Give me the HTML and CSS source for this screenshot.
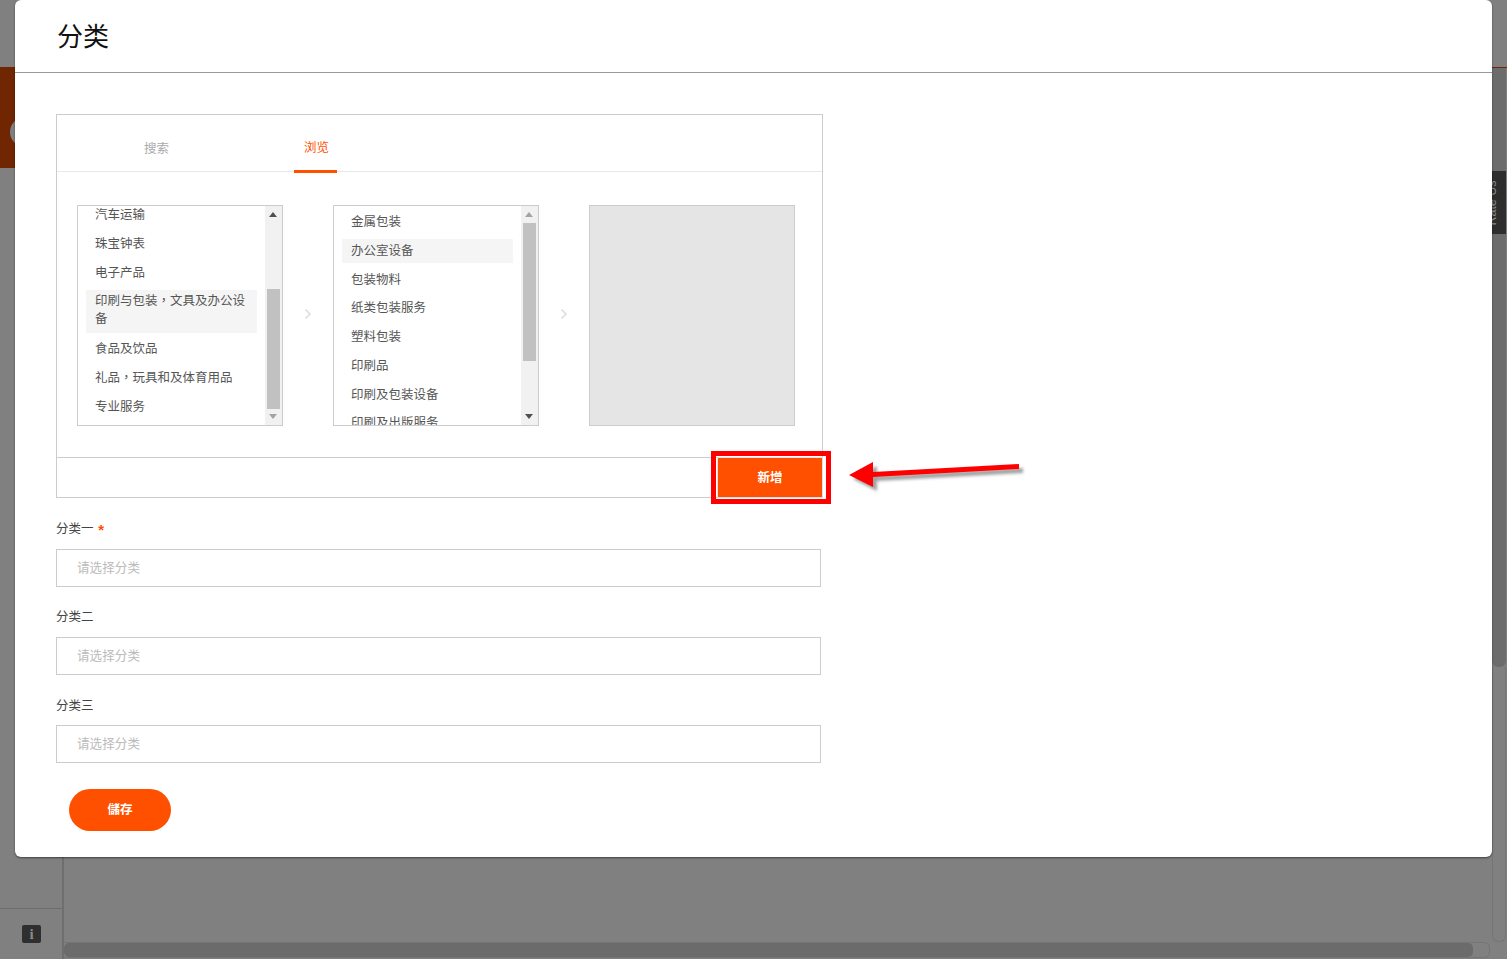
FILE: index.html
```html
<!DOCTYPE html>
<html lang="zh-CN">
<head>
<meta charset="utf-8">
<title>分类</title>
<link rel="stylesheet" href="styles.css">
</head>
<body>
<div class="page">
  <aside class="side">
    <div class="side-band"><span class="avatar"></span></div>
    <div class="side-foot"><span class="info">i</span></div>
  </aside>
  <main class="main">
    <div class="hscroll"><div class="hthumb"></div></div>
  </main>
  <div class="vscroll">
    <div class="vline"></div>
    <div class="vthumb"></div>
    <div class="vtrack"></div>
  </div>
  <div class="rate"><span class="rate-text">Rate Us</span></div>
</div>

<section class="modal">
  <header class="modal-head"><h1 class="title">分类</h1></header>
  <div class="modal-body">
    <div class="picker">
      <nav class="tabs">
        <a class="tab">搜索</a>
        <a class="tab tab-active">浏览</a>
      </nav>
      <div class="panels">
        <div class="listbox">
          <div class="viewport">
            <ul class="items items-first">
              <li class="item">汽车运输</li>
              <li class="item">珠宝钟表</li>
              <li class="item">电子产品</li>
              <li class="item item-on item-tall">印刷与包装<span class="mid" lang="zh-TW">，</span>文具及办公设备</li>
              <li class="item">食品及饮品</li>
              <li class="item">礼品<span class="mid" lang="zh-TW">，</span>玩具和及体育用品</li>
              <li class="item">专业服务</li>
            </ul>
          </div>
          <div class="bar bar-first">
            <span class="up up-dark"></span>
            <div class="thumb thumb-first"></div>
            <span class="down down-light"></span>
          </div>
        </div>
        <svg class="chev" width="8" height="12" viewBox="0 0 8 12"><path d="M1.5 1.5 6 6l-4.500 4.500" fill="none" stroke="#dcdcdc" stroke-width="1.500"/></svg>
        <div class="listbox">
          <div class="viewport">
            <ul class="items items-second">
              <li class="item">金属包装</li>
              <li class="item item-on">办公室设备</li>
              <li class="item">包装物料</li>
              <li class="item">纸类包装服务</li>
              <li class="item">塑料包装</li>
              <li class="item">印刷品</li>
              <li class="item">印刷及包装设备</li>
              <li class="item">印刷及出版服务</li>
            </ul>
          </div>
          <div class="bar bar-second">
            <span class="up up-light"></span>
            <div class="thumb thumb-second"></div>
            <span class="down down-dark"></span>
          </div>
        </div>
        <svg class="chev" width="8" height="12" viewBox="0 0 8 12"><path d="M1.5 1.5 6 6l-4.500 4.500" fill="none" stroke="#dcdcdc" stroke-width="1.500"/></svg>
        <div class="listbox listbox-empty"></div>
      </div>
      <div class="picker-foot"><button class="add" type="button">新增</button></div>
    </div>

    <div class="field">
      <label class="label">分类一 <span class="req">*</span></label>
      <input class="input" type="text" placeholder="请选择分类">
    </div>
    <div class="field">
      <label class="label">分类二</label>
      <input class="input" type="text" placeholder="请选择分类">
    </div>
    <div class="field">
      <label class="label label-last">分类三</label>
      <input class="input" type="text" placeholder="请选择分类">
    </div>
    <button class="save" type="button" lang="zh-TW">儲存</button>
  </div>
</section>

<div class="mark-box"></div>
<svg class="mark-arrow" width="190" height="40" viewBox="0 0 190 40">
  <path class="mark-shadow" d="M4 17 28 4 28 14 174 6 174 11 28 19 28 29Z"/>
  <path class="mark-red" d="M4 17 28 4 28 14 174 6 174 11 28 19 28 29Z"/>
</svg>
</body>
</html>
```

FILE: styles.css
```css
* { box-sizing: border-box; }
html, body { margin: 0; padding: 0; }
body {
  width: 1507px;
  height: 959px;
  overflow: hidden;
  background: #808080;
  font-family: "Noto Sans CJK SC", "Liberation Sans", sans-serif;
  font-size: 12.5px;
  line-height: 18.75px;
  color: #333;
}

/* dimmed page behind the dialog */
.page { display: flex; height: 959px; position: relative; }
.side {
  width: 64px;
  flex: none;
  display: flex;
  flex-direction: column;
  padding-top: 67px;
  border-right: 2px solid #6f6f6f;
}
.side-band {
  height: 101px;
  background: #702600;
  padding: 50px 0 0 10px;
}
.avatar { display: block; width: 30px; height: 30px; border-radius: 50%; background: #808080; }
.side-foot {
  margin-top: auto;
  height: 51px;
  border-top: 1px solid #6c6c6c;
  padding: 16px 0 0 22px;
}
.info {
  display: block;
  width: 19px;
  height: 18px;
  border-radius: 2px;
  background: #2f2f2f;
  color: #8a8a8a;
  font: bold 15px/18px "Liberation Serif", serif;
  text-align: center;
}
.main { flex: 1; display: flex; flex-direction: column; justify-content: flex-end; }
.hscroll {
  height: 16px;
  margin-bottom: 1px;
  border: 1px solid #757575;
  border-left: 0;
  border-radius: 0 6px 6px 0;
  margin-right: 2px;
}
.hthumb { width: 1409px; height: 14px; background: #6b6b6b; border-radius: 5px; }
.vscroll { width: 14px; flex: none; margin-right: 1px; padding-top: 67px; display: flex; flex-direction: column; }
.vline { height: 1px; background: #702600; margin: 0 -1px; }
.vthumb { height: 599px; background: #6c6c6c; border-radius: 0 0 6px 6px; }
.vtrack { height: 275px; border: 1px solid #757575; border-top: 0; border-radius: 0 0 6px 6px; }
.rate {
  position: absolute;
  left: 1470px;
  top: 171px;
  width: 36px;
  height: 63px;
  background: #2e2e2e;
  display: flex;
  align-items: center;
  justify-content: center;
}
.rate-text {
  display: block;
  transform: rotate(-90deg) translateY(4px);
  white-space: nowrap;
  color: #8c8c8c;
  font: 12.5px/14px "Liberation Sans", sans-serif;
}

/* dialog */
.modal {
  position: absolute;
  left: 15px;
  top: 0;
  width: 1477px;
  height: 857px;
  background: #fff;
  border-radius: 6px;
  box-shadow: 0 1px 2px rgba(0, 0, 0, .5);
}
.modal-head {
  height: 73px;
  border-bottom: 1px solid #999;
  padding: 16px 0 0 42px;
}
.title { margin: 0; font-size: 26px; line-height: 38px; font-weight: 400; color: #111; }
.modal-body { padding: 41px 0 0 41px; }

.picker { width: 767px; height: 384px; border: 1px solid #ccc; display: flex; flex-direction: column; }
.tabs {
  height: 57px;
  flex: none;
  display: flex;
  gap: 116px;
  padding-left: 78px;
  border-bottom: 1px solid #e8e8e8;
}
.tab {
  width: 43px;
  height: 58px;
  text-align: center;
  padding-top: 24px;
  color: #aaa;
}
.tab-active { color: #ff5000; padding: 23px 0 0 2px; border-bottom: 3px solid #ff5000; }
.panels { display: flex; align-items: flex-start; padding: 33px 0 0 20px; }
.chev { flex: none; width: 50px; height: 12px; margin-top: 103px; }
.listbox {
  width: 206px;
  height: 221px;
  flex: none;
  border: 1px solid #ccc;
  background: #fff;
  display: flex;
  overflow: hidden;
}
.listbox-empty { background: #e5e5e5; }
.viewport { width: 187px; height: 219px; overflow: hidden; flex: none; }
.items { list-style: none; margin: 0; padding: 0 8px; }
.items-first { margin-top: -4px; }
.items-second { margin-top: 4px; }
.item { padding: 3px 9px; line-height: 18px; margin-bottom: 5px; color: #555; }
.items-second .item { padding: 2px 9px 4px; margin-bottom: 4.75px; }
.item-on { background: #f5f5f5; }
.item-tall { margin-top: 6px; padding-top: 1px; padding-bottom: 6px; margin-bottom: 3px; }
.mid { font-family: "Noto Sans CJK TC", sans-serif; }

.bar { flex: 1; position: relative; background: #f1f1f1; }
.thumb { position: absolute; left: 2px; width: 13px; background: #c1c1c1; }
.thumb-first { top: 83px; height: 120px; }
.thumb-second { top: 17px; height: 138px; }
.up, .down { position: absolute; left: 4px; width: 0; height: 0; border: 4px solid transparent; }
.up { top: 6px; border-top: 0; border-bottom-width: 5px; }
.down { bottom: 6px; border-bottom: 0; border-top-width: 5px; }
.up-dark { border-bottom-color: #505050; }
.up-light { border-bottom-color: #a3a3a3; }
.down-dark { border-top-color: #505050; }
.down-light { border-top-color: #a3a3a3; }

.picker-foot {
  margin-top: 31px;
  flex: 1;
  border-top: 1px solid #ccc;
  display: flex;
  justify-content: flex-end;
}
.add {
  width: 104px;
  height: 39px;
  border: 0;
  padding: 0 0 2px;
  background: #ff5000;
  color: #fff;
  font: bold 12.5px/18px "Noto Sans CJK SC", sans-serif;
  outline: 1px solid #e2e2e2;
}

.field { width: 765px; margin-top: 20px; }
.picker + .field { margin-top: 21px; }
.label { display: block; height: 19px; margin-bottom: 11px; color: #444; }
.label-last { position: relative; top: 1px; }
.req { color: #ff5000; margin-left: 2px; font: bold 15px/15px "Liberation Sans", sans-serif; position: relative; top: 2px; }
.input {
  display: block;
  width: 765px;
  height: 38px;
  border: 1px solid #ccc;
  border-radius: 0;
  padding: 0 20px 3px;
  background: #fff;
  font: 12.6px/18px "Noto Sans CJK SC", sans-serif;
  color: #333;
}
.input::placeholder { color: #bbb; opacity: 1; }
.save {
  display: block;
  margin: 26px 0 0 13px;
  width: 102px;
  height: 42px;
  border: 0;
  border-radius: 21px;
  padding: 0 0 2px;
  background: #ff5000;
  color: #fff;
  font: bold 12.5px/18px "Noto Sans CJK TC", sans-serif;
}

/* red annotation drawn over the screenshot */
.mark-box {
  position: absolute;
  left: 711px;
  top: 451px;
  width: 120px;
  height: 53px;
  border: 5px solid #f00;
}
.mark-arrow { position: absolute; left: 845px; top: 458px; }
.mark-red { fill: #f00; }
.mark-shadow { fill: #555; opacity: .55; transform: translate(4px, 4px); filter: blur(1.500px); }
```
